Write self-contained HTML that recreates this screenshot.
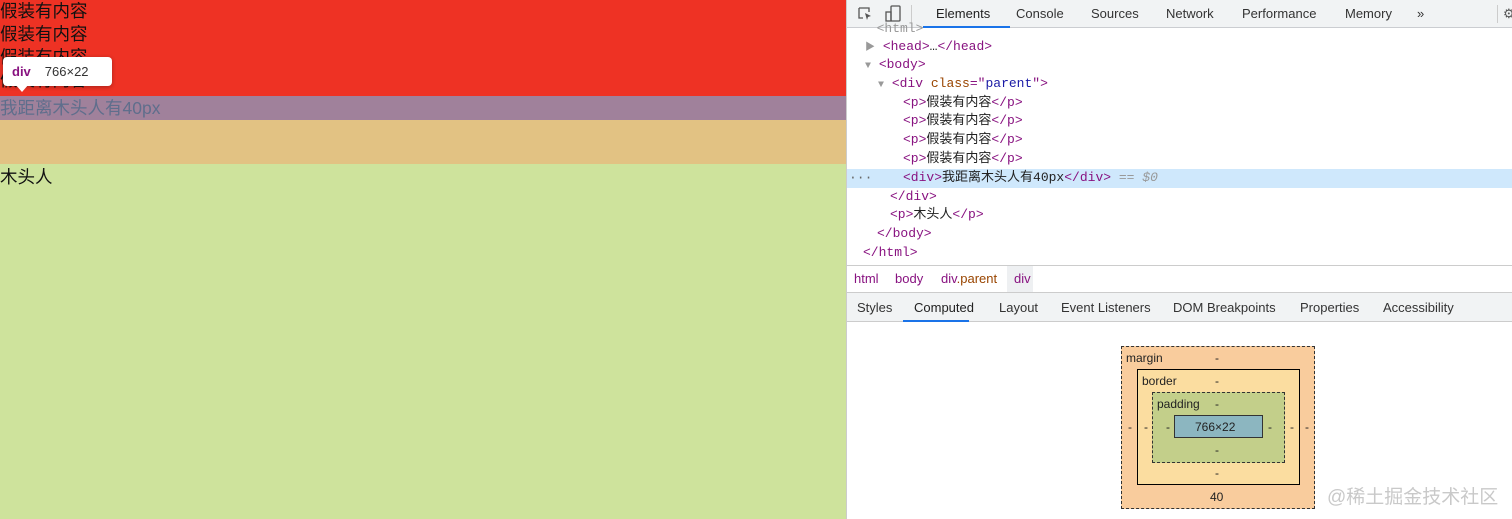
<!DOCTYPE html>
<html><head><meta charset="utf-8"><style>
*{margin:0;padding:0;box-sizing:border-box}
body{width:1512px;height:519px;overflow:hidden;position:relative;font-family:"Liberation Sans","Noto Sans CJK SC",sans-serif;background:#fff}
.abs{position:absolute}
.left{left:0;top:0;width:846px;height:519px;background:#cee39c}
.p{position:absolute;left:0;font-size:17.5px;line-height:23px;color:#111}
.dt{left:846px;top:0;width:666px;height:519px;background:#fff;border-left:1px solid #ccc}
.tb{left:0;top:0;width:666px;height:28px;background:#f1f3f4;border-bottom:1px solid #cbcdd1;font-size:13px;color:#333}
.tb span{position:absolute;top:6px}
.code{font-family:"Liberation Mono","Noto Sans CJK SC",monospace;font-size:13px;color:#222;position:absolute;white-space:pre;line-height:18px}
.t{color:#881280}.a{color:#994500}.v{color:#1a1aa6}.g{color:#999;font-size:10px}
.bc{font-size:13px;position:absolute;top:271px;color:#881280}
.tabs span{position:absolute;top:300px;font-size:13px;color:#333}
.bm{font-size:12px;color:#222;position:absolute}
</style></head><body>
<div class="abs left">
<div class="abs" style="left:0;top:0;width:846px;height:96px;background:#ee3224"></div>
<div class="abs" style="left:0;top:96px;width:846px;height:24px;background:#a0819b"></div>
<div class="abs" style="left:0;top:120px;width:846px;height:44px;background:#e2c283"></div>
<div class="p" style="top:0">假装有内容</div>
<div class="p" style="top:23px">假装有内容</div>
<div class="p" style="top:46px">假装有内容</div>
<div class="p" style="top:69px">假装有内容</div>
<div class="p" style="top:97px;color:#5f6e8c">我距离木头人有40px</div>
<div class="p" style="top:166px">木头人</div>
<div class="abs" style="left:3px;top:57px;width:109px;height:29px;background:#fff;border-radius:4px;box-shadow:0 1px 4px rgba(0,0,0,.3);font-size:13px;line-height:29px">
<b style="color:#881280;margin-left:9px">div</b><span style="color:#333;margin-left:14px">766×22</span></div>
<div class="abs" style="left:15px;top:84px;width:0;height:0;border-left:7px solid transparent;border-right:7px solid transparent;border-top:8px solid #fff"></div>
</div>
<div class="abs dt">
<div class="abs tb">
<svg class="abs" style="left:10px;top:6px" width="16" height="16" viewBox="0 0 16 16"><path d="M2 2h10v4M2 2v10h4" fill="none" stroke="#555" stroke-width="1.3"/><path d="M8 7l6 3-3 1-1 3z" fill="#555"/></svg>
<svg class="abs" style="left:38px;top:5px" width="18" height="18" viewBox="0 0 18 18"><rect x="6" y="1" width="9" height="15" rx="1" fill="none" stroke="#555" stroke-width="1.3"/><rect x="1" y="7" width="5" height="9" fill="none" stroke="#555" stroke-width="1.3"/></svg>
<div class="abs" style="left:64px;top:5px;width:1px;height:18px;background:#ccc"></div>
<span style="left:89px;color:#222">Elements</span>
<div class="abs" style="left:76px;top:26px;width:87px;height:2px;background:#1a73e8"></div>
<span style="left:169px">Console</span>
<span style="left:244px">Sources</span>
<span style="left:319px">Network</span>
<span style="left:395px">Performance</span>
<span style="left:498px">Memory</span>
<span style="left:570px">»</span>
<div class="abs" style="left:650px;top:5px;width:1px;height:18px;background:#ccc"></div>
<span style="left:656px;color:#555">⚙</span>
</div>
<div class="abs" style="left:0;top:169px;width:666px;height:19px;background:#cfe8fc"></div>
<div class="code" style="left:2px;top:169px;color:#666">···</div>
<div class="code" style="left:14px;top:20px;color:#999">  &lt;html&gt;</div>
<div class="code" style="left:18px;top:38px"><span class="g">▶</span> <span class="t">&lt;head&gt;</span>…<span class="t">&lt;/head&gt;</span></div>
<div class="code" style="left:18px;top:56px"><span class="g">▼</span> <span class="t">&lt;body&gt;</span></div>
<div class="code" style="left:31px;top:75px"><span class="g">▼</span> <span class="t">&lt;div </span><span class="a">class</span><span class="t">="</span><span class="v">parent</span><span class="t">"&gt;</span></div>
<div class="code" style="left:56px;top:94px"><span class="t">&lt;p&gt;</span>假装有内容<span class="t">&lt;/p&gt;</span></div>
<div class="code" style="left:56px;top:112px"><span class="t">&lt;p&gt;</span>假装有内容<span class="t">&lt;/p&gt;</span></div>
<div class="code" style="left:56px;top:131px"><span class="t">&lt;p&gt;</span>假装有内容<span class="t">&lt;/p&gt;</span></div>
<div class="code" style="left:56px;top:150px"><span class="t">&lt;p&gt;</span>假装有内容<span class="t">&lt;/p&gt;</span></div>
<div class="code" style="left:56px;top:169px"><span class="t">&lt;div&gt;</span>我距离木头人有40px<span class="t">&lt;/div&gt;</span> <span class="g" style="font-size:13px">== <i>$0</i></span></div>
<div class="code" style="left:43px;top:188px"><span class="t">&lt;/div&gt;</span></div>
<div class="code" style="left:43px;top:206px"><span class="t">&lt;p&gt;</span>木头人<span class="t">&lt;/p&gt;</span></div>
<div class="code" style="left:30px;top:225px"><span class="t">&lt;/body&gt;</span></div>
<div class="code" style="left:16px;top:244px"><span class="t">&lt;/html&gt;</span></div>
<div class="abs" style="left:0;top:265px;width:666px;height:1px;background:#ccc"></div>
<div class="abs" style="left:160px;top:266px;width:26px;height:26px;background:#eef0f2"></div>
<span class="bc" style="left:7px">html</span><span class="bc" style="left:48px">body</span><span class="bc" style="left:94px">div<span style="color:#994500">.parent</span></span><span class="bc" style="left:167px">div</span>
<div class="abs" style="left:0;top:292px;width:666px;height:30px;background:#f1f3f4;border-top:1px solid #ccc;border-bottom:1px solid #ccc"></div>
<div class="tabs"><span style="left:10px">Styles</span><span style="left:67px;color:#222">Computed</span><span style="left:152px">Layout</span><span style="left:214px">Event Listeners</span><span style="left:326px">DOM Breakpoints</span><span style="left:453px">Properties</span><span style="left:536px">Accessibility</span></div>
<div class="abs" style="left:56px;top:320px;width:66px;height:2px;background:#1a73e8"></div>
<div class="abs" style="left:274px;top:346px;width:194px;height:163px;background:#f9cc9d;border:1px dashed #333"></div>
<div class="abs" style="left:290px;top:369px;width:163px;height:116px;background:#fbdda0;border:1px solid #000"></div>
<div class="abs" style="left:305px;top:392px;width:133px;height:71px;background:#c3cf8a;border:1px dashed #333"></div>
<div class="abs" style="left:327px;top:415px;width:89px;height:23px;background:#8cb6c0;border:1px solid #333"></div>
<span class="bm" style="left:279px;top:351px">margin</span><span class="bm" style="left:368px;top:351px">-</span>
<span class="bm" style="left:295px;top:374px">border</span><span class="bm" style="left:368px;top:374px">-</span>
<span class="bm" style="left:310px;top:397px">padding</span><span class="bm" style="left:368px;top:397px">-</span>
<span class="bm" style="left:348px;top:420px">766×22</span>
<span class="bm" style="left:281px;top:420px">-</span><span class="bm" style="left:297px;top:420px">-</span><span class="bm" style="left:319px;top:420px">-</span>
<span class="bm" style="left:421px;top:420px">-</span><span class="bm" style="left:443px;top:420px">-</span><span class="bm" style="left:458px;top:420px">-</span>
<span class="bm" style="left:368px;top:443px">-</span><span class="bm" style="left:368px;top:466px">-</span>
<span class="bm" style="left:363px;top:490px">40</span>
<span class="abs" style="left:480px;top:482px;font-size:19px;color:#c9c9c9">@稀土掘金技术社区</span>
</div>
</body></html>
